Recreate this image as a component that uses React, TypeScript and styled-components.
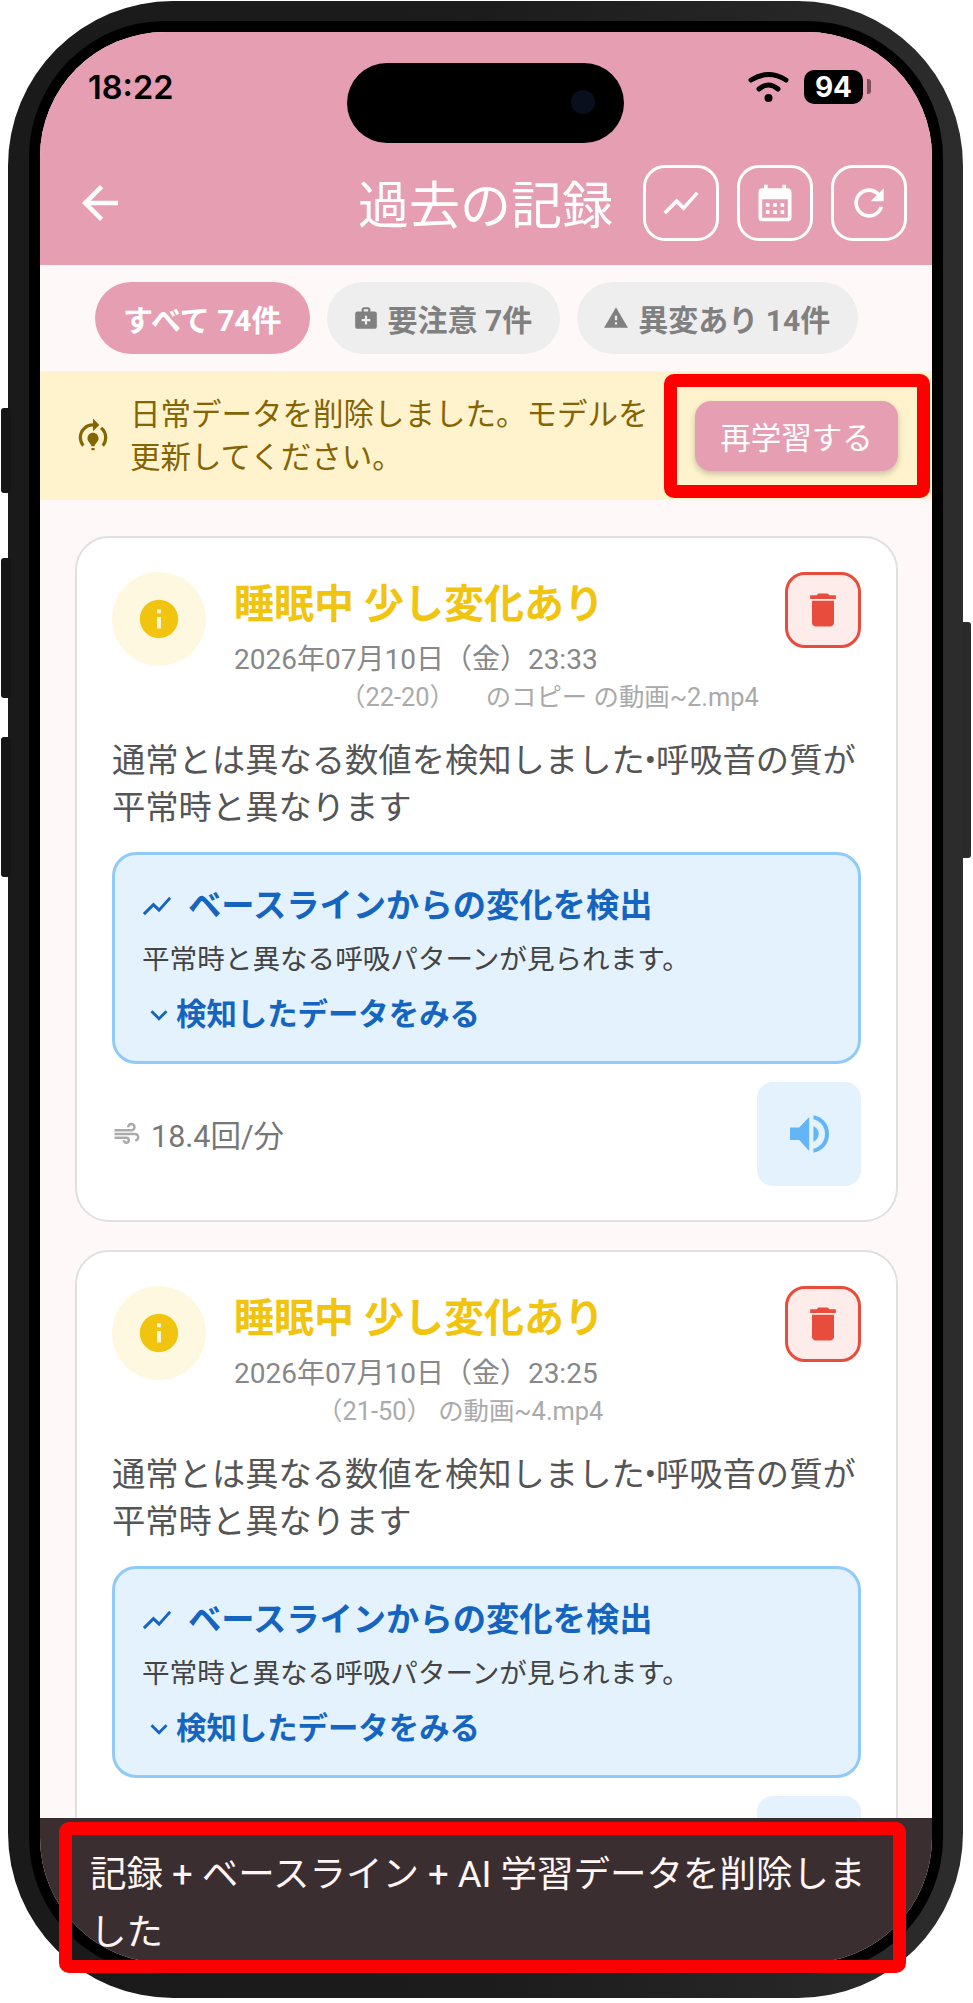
import * as React from "react";
import styled, { createGlobalStyle } from "styled-components";
import {
  MdArrowBack,
  MdShowChart,
  MdCalendarMonth,
  MdRefresh,
  MdMedicalServices,
  MdWarning,
  MdModelTraining,
  MdInfo,
  MdDelete,
  MdExpandMore,
  MdAir,
} from "react-icons/md";

const PINK = "#e69eb3";
const BLUE = "#1565c0";

const GlobalStyle = createGlobalStyle`
  html, body {
    margin: 0;
    padding: 0;
    background: #fff;
  }
  * {
    box-sizing: border-box;
  }
  body {
    font-family: Roboto, "Noto Sans CJK JP", sans-serif;
  }
`;

const Page = styled.div`
  width: 973px;
  height: 2003px;
  padding: 1px 0 0 8px;
  overflow: hidden;
`;

const Phone = styled.div`
  position: relative;
  width: 955px;
  height: 1997px;
  padding: 31px 31px 35px 32px;
  border-radius: 165px;
  background: linear-gradient(90deg, #1a1a1a, #1c1c1c 50%, #2c2c2c);
`;

const SideKey = styled.div<{ $top: number; $height: number; $right?: boolean }>`
  position: absolute;
  top: ${(p) => p.$top}px;
  height: ${(p) => p.$height}px;
  width: 10px;
  background: #161616;
  border-radius: 3px;
  ${(p) => (p.$right ? "right: -8px; background: #2a2a2a;" : "left: -7px;")}
`;

const Screen = styled.div`
  position: relative;
  display: flex;
  flex-direction: column;
  height: 100%;
  overflow: hidden;
  border-radius: 125px;
  background: #fff8f8;
  box-shadow: 0 0 0 11px #000;
`;

const Island = styled.div`
  position: absolute;
  top: 62px;
  left: 339px;
  width: 277px;
  height: 80px;
  border-radius: 40px;
  background: #000;
  &::after {
    content: "";
    position: absolute;
    top: 27px;
    right: 29px;
    width: 24px;
    height: 24px;
    border-radius: 50%;
    background: #0a0f1e;
  }
`;

const BannerMark = styled.div`
  position: absolute;
  top: 373px;
  left: 656px;
  width: 266px;
  height: 124px;
  border: 13px solid #f00;
  border-radius: 10px;
`;

const ToastMark = styled.div`
  position: absolute;
  top: 1821px;
  left: 51px;
  width: 847px;
  height: 151px;
  border: 13px solid #f00;
  border-radius: 10px;
`;

const Header = styled.header`
  flex: none;
  height: 233px;
  background: ${PINK};
`;

const StatusBar = styled.div`
  display: flex;
  align-items: center;
  justify-content: space-between;
  height: 112px;
  padding: 0 69px 2px 48px;
`;

const Clock = styled.span`
  font-family: Inter, Roboto, sans-serif;
  font-size: 32.5px;
  font-weight: 600;
  color: #000;
`;

const StatusRight = styled.div`
  display: flex;
  align-items: center;
  gap: 15px;
`;

const Battery = styled.div`
  position: relative;
  width: 59px;
  height: 34px;
  border-radius: 10px;
  background: #000;
  color: #fff;
  font-family: Inter, Roboto, sans-serif;
  font-size: 28px;
  font-weight: 700;
  line-height: 34px;
  text-align: center;
  &::after {
    content: "";
    position: absolute;
    top: 9px;
    right: -8px;
    width: 4px;
    height: 15px;
    border-radius: 0 3px 3px 0;
    background: #7d4f5d;
  }
`;

const Toolbar = styled.div`
  display: flex;
  align-items: center;
  height: 76px;
  margin-top: 21px;
  padding: 0 25px 0 33px;
  color: #fff;
`;

const Title = styled.h1`
  margin: 8px 30px 0 auto;
  font-size: 51px;
  font-weight: 400;
  line-height: 60px;
  color: #fff;
`;

const ToolButton = styled.button`
  display: flex;
  align-items: center;
  justify-content: center;
  width: 76px;
  height: 76px;
  margin-left: 18px;
  padding: 0;
  border: 3px solid #fff;
  border-radius: 22px;
  background: none;
  color: #fff;
  &:first-of-type {
    margin-left: 0;
  }
`;

const Filters = styled.div`
  flex: none;
  display: flex;
  gap: 17px;
  height: 106px;
  padding: 17px 0 0 55px;
`;

const Chip = styled.div<{ $active?: boolean }>`
  display: flex;
  align-items: center;
  gap: 9px;
  height: 72px;
  padding: 0 28px 0 ${(p) => (p.$active ? 28 : 26)}px;
  border-radius: 36px;
  background: ${(p) => (p.$active ? PINK : "#eeeeee")};
  color: ${(p) => (p.$active ? "#fff" : "#808080")};
  font-size: 30px;
  font-weight: 700;
  white-space: nowrap;
`;

const Banner = styled.div`
  flex: none;
  display: flex;
  align-items: center;
  height: 129px;
  padding: 0 34px 0 34px;
  background: #fff3cd;
  color: #856404;
`;

const BannerText = styled.p`
  width: 530px;
  margin: 0 0 0 18px;
  font-size: 30.5px;
  line-height: 43px;
`;

const RetrainButton = styled.button`
  width: 203px;
  height: 70px;
  margin-left: auto;
  padding: 0;
  border: none;
  border-radius: 16px;
  background: ${PINK};
  color: #fff;
  font-family: inherit;
  font-size: 30.5px;
  box-shadow: 0 3px 6px rgba(0, 0, 0, 0.22);
`;

const List = styled.div`
  flex: 1;
  min-height: 0;
  overflow: hidden;
  display: flex;
  flex-direction: column;
  gap: 28px;
  padding: 36px 34px 0 35px;
`;

const Card = styled.article`
  flex: none;
  padding: 34px 35px 34px 35px;
  border: 2px solid #e0e0e0;
  border-radius: 34px;
  background: #fff;
`;

const CardTop = styled.div`
  display: flex;
  align-items: flex-start;
`;

const StateIcon = styled.div`
  flex: none;
  display: flex;
  align-items: center;
  justify-content: center;
  width: 94px;
  height: 94px;
  border-radius: 50%;
  background: #fff8e1;
  color: #f1c40f;
`;

const Heading = styled.div`
  flex: 1;
  min-width: 0;
  margin-left: 28px;
  padding-top: 10px;
`;

const CardTitle = styled.h2`
  margin: 0;
  font-size: 40px;
  font-weight: 700;
  line-height: 46px;
  color: #f1c40f;
`;

const DateLine = styled.div`
  margin-top: 13px;
  font-size: 28px;
  line-height: 38px;
  color: #888;
`;

const FileLine = styled.div<{ $indent: number }>`
  margin-top: 1px;
  padding-left: ${(p) => p.$indent}px;
  font-size: 25.4px;
  line-height: 35px;
  color: #aaa;
  white-space: nowrap;
`;

const DeleteButton = styled.button`
  flex: none;
  display: flex;
  align-items: center;
  justify-content: center;
  width: 76px;
  height: 76px;
  padding: 0;
  border: 3px solid #e74c3c;
  border-radius: 20px;
  background: #fdecea;
  color: #e74c3c;
`;

const Message = styled.p`
  margin: 22px 0 0;
  font-size: 33.3px;
  line-height: 47px;
  color: #555;
`;

const Baseline = styled.section`
  height: 212px;
  margin-top: 21px;
  padding: 29px 27px 0;
  border: 3px solid #90caf9;
  border-radius: 24px;
  background: #e3f2fd;
`;

const BaselineTitle = styled.div`
  display: flex;
  align-items: center;
  gap: 14px;
  margin-left: -2px;
  font-size: 33.3px;
  font-weight: 700;
  line-height: 44px;
  color: ${BLUE};
`;

const BaselineText = styled.div`
  margin-top: 13px;
  font-size: 27.6px;
  line-height: 38px;
  color: #444;
`;

const DetailLink = styled.div`
  display: flex;
  align-items: center;
  margin-top: 15px;
  font-size: 30.4px;
  font-weight: 700;
  line-height: 42px;
  color: ${BLUE};
`;

const CardFooter = styled.div`
  display: flex;
  align-items: center;
  margin-top: 18px;
`;

const Rate = styled.div`
  display: flex;
  align-items: center;
  gap: 9px;
  font-size: 30.5px;
  color: #777;
  svg {
    color: #aaa;
  }
`;

const AudioButton = styled.button`
  display: flex;
  align-items: center;
  justify-content: center;
  width: 104px;
  height: 104px;
  margin-left: auto;
  padding: 0;
  border: none;
  border-radius: 16px;
  background: #e3f2fd;
`;

const Toast = styled.div`
  flex: none;
  height: 145px;
  padding: 28px 50px 0;
  background: #3a2e30;
  color: #fff5f5;
  font-size: 36.5px;
  line-height: 58px;
`;

const WifiIcon = () => (
  <svg width="41" height="30" viewBox="0 0 41 30" fill="none" stroke="#000" strokeWidth="5" strokeLinecap="round">
    <path d="M3 8Q20.500 -3 38 8" />
    <path d="M11 17Q20.500 9 30 17" />
    <circle cx="20.500" cy="26" r="4" fill="#000" stroke="none" />
  </svg>
);

const SpeakerIcon = () => (
  <svg width="39" height="38" viewBox="0 0 118 113" fill="#64b5f6">
    <path d="M0 37H28L58 5V108L28 75H0Z" />
    <path d="M71 0C100 5 118 28 118 56C118 85 100 108 71 113V101C92 97 106 78 106 56C106 35 92 17 71 12Z" />
    <path d="M71 33C80 37 87 46 87 56C87 67 80 76 71 80Z" />
  </svg>
);

// the second card runs under the toast, so its rate never shows
const records = [
  {
    date: "2026年07月10日（金）23:33",
    file: "（22-20）\u3000\u2002\u2009のコピー の動画~2.mp4",
    indent: 106,
    rate: "18.4回/分",
  },
  { date: "2026年07月10日（金）23:25", file: "（21-50） の動画~4.mp4", indent: 83 },
];

export default function App() {
  return (
    <Page>
      <GlobalStyle />
      <Phone>
        <SideKey $top={407} $height={85} />
        <SideKey $top={557} $height={140} />
        <SideKey $top={736} $height={140} />
        <SideKey $top={621} $height={236} $right />
        <Screen>
          <Header>
            <StatusBar>
              <Clock>18:22</Clock>
              <StatusRight>
                <WifiIcon />
                <Battery>94</Battery>
              </StatusRight>
            </StatusBar>
            <Toolbar>
              <MdArrowBack size={54} />
              <Title>過去の記録</Title>
              <ToolButton>
                <MdShowChart size={42} />
              </ToolButton>
              <ToolButton>
                <MdCalendarMonth size={44} />
              </ToolButton>
              <ToolButton>
                <MdRefresh size={44} />
              </ToolButton>
            </Toolbar>
          </Header>
          <Filters>
            <Chip $active>すべて 74件</Chip>
            <Chip>
              <MdMedicalServices size={26} />
              要注意 7件
            </Chip>
            <Chip>
              <MdWarning size={26} />
              異変あり 14件
            </Chip>
          </Filters>
          <Banner>
            <MdModelTraining size={38} />
            <BannerText>日常データを削除しました。モデルを更新してください。</BannerText>
            <RetrainButton>再学習する</RetrainButton>
          </Banner>
          <List>
            {records.map((r) => (
              <Card key={r.date}>
                <CardTop>
                  <StateIcon>
                    <MdInfo size={46} />
                  </StateIcon>
                  <Heading>
                    <CardTitle>睡眠中 少し変化あり</CardTitle>
                    <DateLine>{r.date}</DateLine>
                    <FileLine $indent={r.indent}>{r.file}</FileLine>
                  </Heading>
                  <DeleteButton>
                    <MdDelete size={44} />
                  </DeleteButton>
                </CardTop>
                <Message>通常とは異なる数値を検知しました•呼吸音の質が平常時と異なります</Message>
                <Baseline>
                  <BaselineTitle>
                    <MdShowChart size={34} />
                    ベースラインからの変化を検出
                  </BaselineTitle>
                  <BaselineText>平常時と異なる呼吸パターンが見られます。</BaselineText>
                  <DetailLink>
                    <MdExpandMore size={34} />
                    検知したデータをみる
                  </DetailLink>
                </Baseline>
                <CardFooter>
                  {r.rate && (
                    <Rate>
                      <MdAir size={30} />
                      {r.rate}
                    </Rate>
                  )}
                  <AudioButton>
                    <SpeakerIcon />
                  </AudioButton>
                </CardFooter>
              </Card>
            ))}
          </List>
          <Toast>記録 + ベースライン + AI 学習データを削除しました</Toast>
        </Screen>
        <Island />
        <BannerMark />
        <ToastMark />
      </Phone>
    </Page>
  );
}
